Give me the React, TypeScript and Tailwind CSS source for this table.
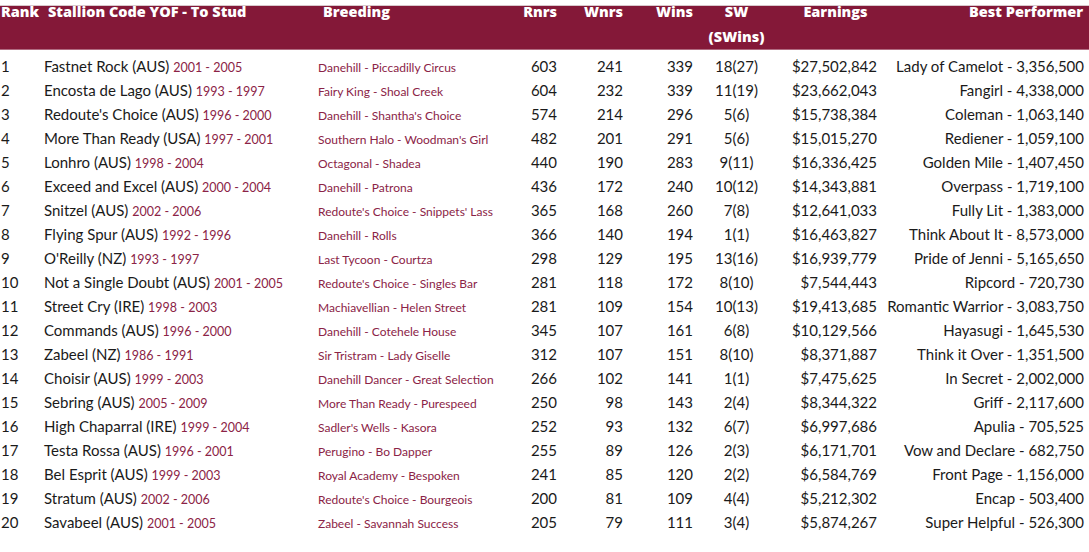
import React from "react";

type Row = [string, string, string, string, number, number, number, string, string, string];

const rows: Row[] = [
  ["1", "Fastnet Rock (AUS)", "2001 - 2005", "Danehill - Piccadilly Circus", 603, 241, 339, "18(27)", "$27,502,842", "Lady of Camelot - 3,356,500"],
  ["2", "Encosta de Lago (AUS)", "1993 - 1997", "Fairy King - Shoal Creek", 604, 232, 339, "11(19)", "$23,662,043", "Fangirl - 4,338,000"],
  ["3", "Redoute's Choice (AUS)", "1996 - 2000", "Danehill - Shantha's Choice", 574, 214, 296, "5(6)", "$15,738,384", "Coleman - 1,063,140"],
  ["4", "More Than Ready (USA)", "1997 - 2001", "Southern Halo - Woodman's Girl", 482, 201, 291, "5(6)", "$15,015,270", "Rediener - 1,059,100"],
  ["5", "Lonhro (AUS)", "1998 - 2004", "Octagonal - Shadea", 440, 190, 283, "9(11)", "$16,336,425", "Golden Mile - 1,407,450"],
  ["6", "Exceed and Excel (AUS)", "2000 - 2004", "Danehill - Patrona", 436, 172, 240, "10(12)", "$14,343,881", "Overpass - 1,719,100"],
  ["7", "Snitzel (AUS)", "2002 - 2006", "Redoute's Choice - Snippets' Lass", 365, 168, 260, "7(8)", "$12,641,033", "Fully Lit - 1,383,000"],
  ["8", "Flying Spur (AUS)", "1992 - 1996", "Danehill - Rolls", 366, 140, 194, "1(1)", "$16,463,827", "Think About It - 8,573,000"],
  ["9", "O'Reilly (NZ)", "1993 - 1997", "Last Tycoon - Courtza", 298, 129, 195, "13(16)", "$16,939,779", "Pride of Jenni - 5,165,650"],
  ["10", "Not a Single Doubt (AUS)", "2001 - 2005", "Redoute's Choice - Singles Bar", 281, 118, 172, "8(10)", "$7,544,443", "Ripcord - 720,730"],
  ["11", "Street Cry (IRE)", "1998 - 2003", "Machiavellian - Helen Street", 281, 109, 154, "10(13)", "$19,413,685", "Romantic Warrior - 3,083,750"],
  ["12", "Commands (AUS)", "1996 - 2000", "Danehill - Cotehele House", 345, 107, 161, "6(8)", "$10,129,566", "Hayasugi - 1,645,530"],
  ["13", "Zabeel (NZ)", "1986 - 1991", "Sir Tristram - Lady Giselle", 312, 107, 151, "8(10)", "$8,371,887", "Think it Over - 1,351,500"],
  ["14", "Choisir (AUS)", "1999 - 2003", "Danehill Dancer - Great Selection", 266, 102, 141, "1(1)", "$7,475,625", "In Secret - 2,002,000"],
  ["15", "Sebring (AUS)", "2005 - 2009", "More Than Ready - Purespeed", 250, 98, 143, "2(4)", "$8,344,322", "Griff - 2,117,600"],
  ["16", "High Chaparral (IRE)", "1999 - 2004", "Sadler's Wells - Kasora", 252, 93, 132, "6(7)", "$6,997,686", "Apulia - 705,525"],
  ["17", "Testa Rossa (AUS)", "1996 - 2001", "Perugino - Bo Dapper", 255, 89, 126, "2(3)", "$6,171,701", "Vow and Declare - 682,750"],
  ["18", "Bel Esprit (AUS)", "1999 - 2003", "Royal Academy - Bespoken", 241, 85, 120, "2(2)", "$6,584,769", "Front Page - 1,156,000"],
  ["19", "Stratum (AUS)", "2002 - 2006", "Redoute's Choice - Bourgeois", 200, 81, 109, "4(4)", "$5,212,302", "Encap - 503,400"],
  ["20", "Savabeel (AUS)", "2001 - 2005", "Zabeel - Savannah Success", 205, 79, 111, "3(4)", "$5,874,267", "Super Helpful - 526,300"],
];

const grid = "grid grid-cols-[44px_274px_192px_47px_66px_70px_87px_97px_208px]";

export default function App() {
  return (
    <div className="w-[1089px] h-[552px] bg-white overflow-hidden" style={{ fontFamily: "Lato, 'Open Sans', sans-serif" }}>
      <div className="h-[5px]" />
      <div
        className={`${grid} h-[45px] bg-[#841838] border-t border-[#d8c8cc] border-b border-b-[#b06a80] text-white font-extrabold text-[14.5px] leading-[14px]`}
        style={{ fontFamily: "'Open Sans', Lato, sans-serif" }}
      >
        <div className="pl-[1px] -mt-[1px] whitespace-nowrap">Rank</div>
        <div className="pl-[4px] -mt-[1px] whitespace-nowrap">Stallion Code YOF - To Stud</div>
        <div className="pl-[5px] -mt-[1px]">Breeding</div>
        <div className="text-right -mt-[1px]">Rnrs</div>
        <div className="text-right -mt-[1px]">Wnrs</div>
        <div className="text-right -mt-[1px]">Wins</div>
        <div className="text-center -mt-[1px] flex flex-col gap-[11px]">
          <span>SW</span>
          <span>(SWins)</span>
        </div>
        <div className="text-center pl-[14px] -mt-[1px] whitespace-nowrap">Earnings</div>
        <div className="text-right pr-[2px] -mt-[1px] whitespace-nowrap">Best Performer</div>
      </div>
      <div className="flex flex-col pt-[8px]">
        {rows.map((r) => (
          <div key={r[0]} className={`${grid} h-[24px] items-baseline text-[15px] leading-[16px] text-[#1a1a1a]`}>
            <div className="pl-[1px]">{r[0]}</div>
            <div className="whitespace-nowrap">
              {r[1]} <span className="text-[12.5px] text-[#8b2346]">{r[2]}</span>
            </div>
            <div className="text-[12px] text-[#8b2346] whitespace-nowrap">{r[3]}</div>
            <div className="text-right">{r[4]}</div>
            <div className="text-right">{r[5]}</div>
            <div className="text-right">{r[6]}</div>
            <div className="text-center">{r[7]}</div>
            <div className="text-right">{r[8]}</div>
            <div className="text-right pr-[1px] whitespace-nowrap">{r[9]}</div>
          </div>
        ))}
      </div>
    </div>
  );
}
